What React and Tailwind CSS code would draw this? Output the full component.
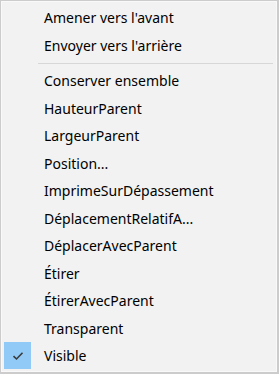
import React from 'react'

const top = ['Amener vers l\'avant', 'Envoyer vers l\'arrière']
const rest = [
  'Conserver ensemble',
  'HauteurParent',
  'LargeurParent',
  'Position...',
  'ImprimeSurDépassement',
  'DéplacementRelatifA...',
  'DéplacerAvecParent',
  'Étirer',
  'ÉtirerAvecParent',
  'Transparent',
  'Visible',
]

function Item({ label, checked }) {
  return (
    <div className="flex items-center h-[27.5px]">
      <div className="w-[42px] h-full flex items-center pl-[2px]">
        {checked && (
          <div className="w-[27px] h-[27px] bg-[#91c9f7] flex items-center justify-center">
            <svg width="12" height="10" viewBox="0 0 12 10">
              <path d="M1.5 5.2 L4.5 8 L10.5 1.8" fill="none" stroke="#3a3a3a" strokeWidth="1.6" />
            </svg>
          </div>
        )}
      </div>
      <span className="text-[14px] text-black">{label}</span>
    </div>
  )
}

export default function App() {
  return (
    <div className="w-[279px] h-[374px] bg-[#f2f2f2] border border-[#cccccc] border-r-2 border-b-2 overflow-hidden" style={{ fontFamily: '"Segoe UI", "Noto Sans", "Open Sans", sans-serif' }}>
      <div className="border border-[#f9f9f9] h-full pt-[2px]">
        {top.map(t => <Item key={t} label={t} />)}
        <div className="h-[8px] flex items-center pl-[36px] pr-[3px]">
          <div className="h-px w-full bg-[#d7d7d7]"></div>
        </div>
        {rest.map(t => <Item key={t} label={t} checked={t === 'Visible'} />)}
      </div>
    </div>
  )
}
